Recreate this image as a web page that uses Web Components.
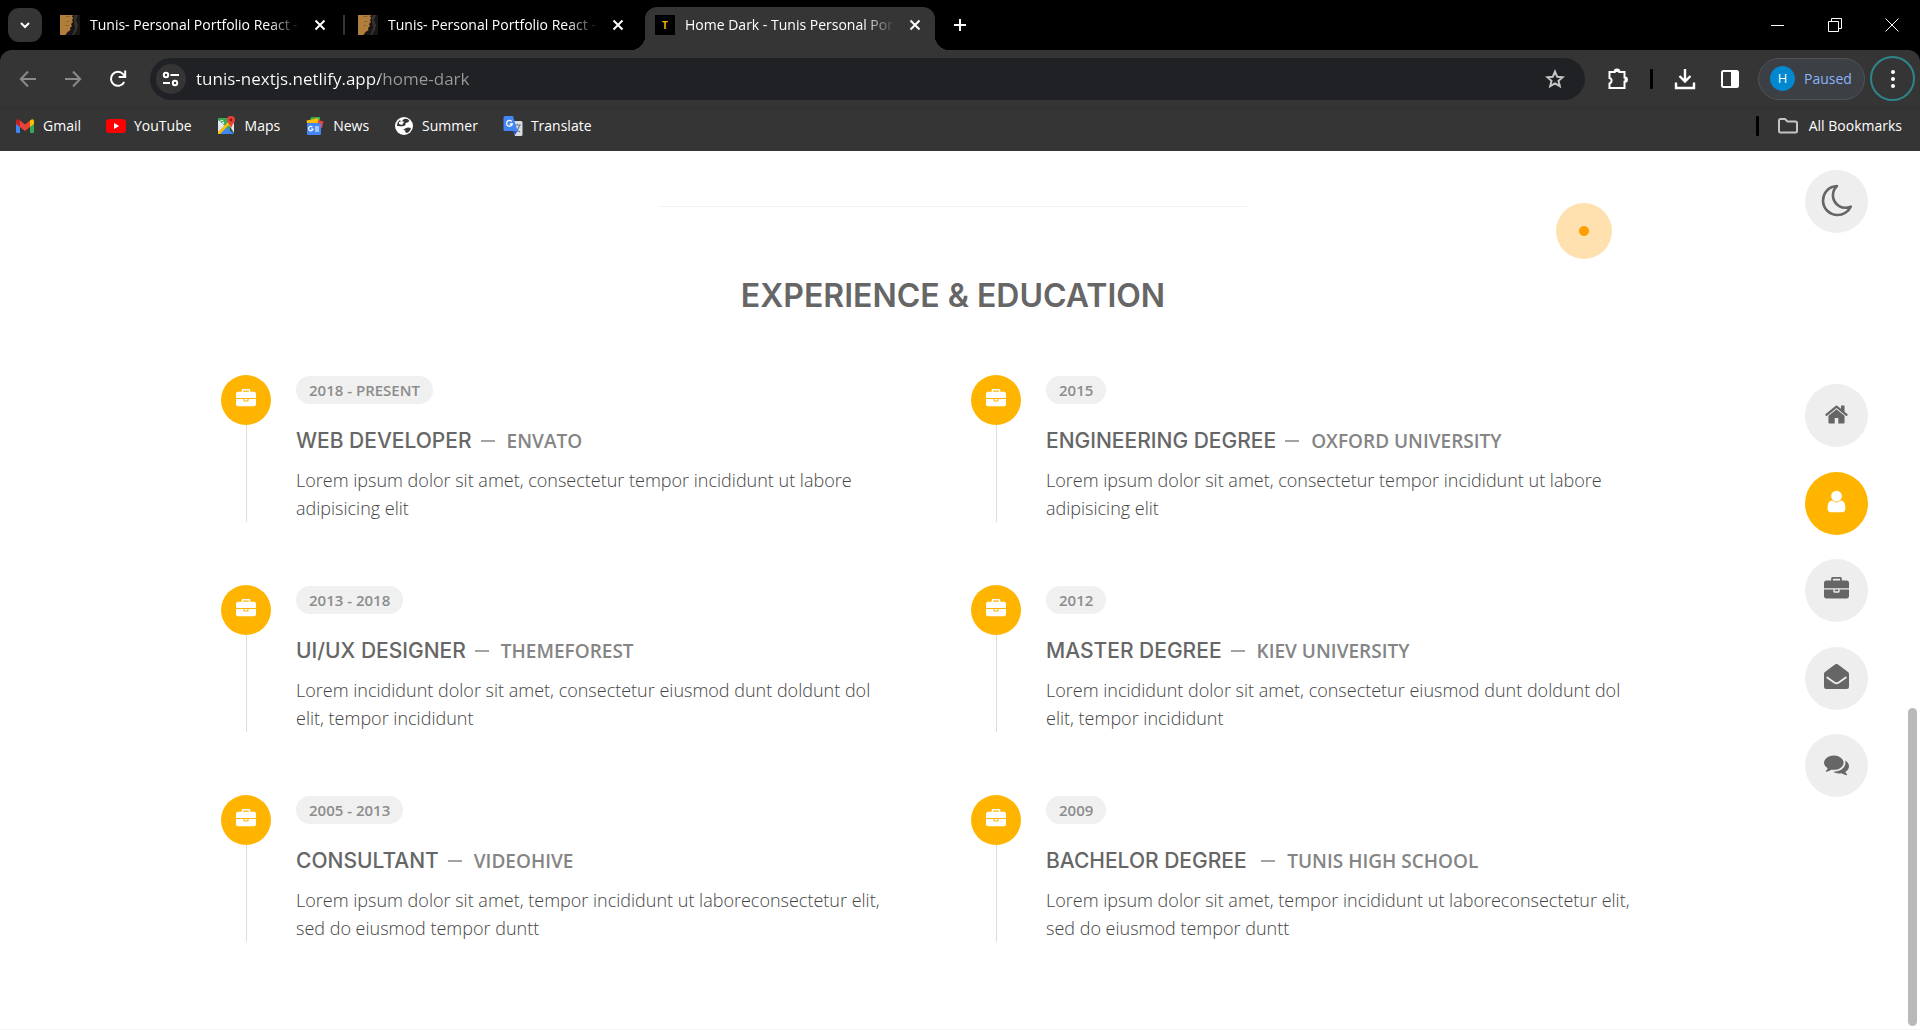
<!DOCTYPE html>
<html lang="en">
<head>
<meta charset="utf-8">
<title>Home Dark - Tunis Personal Portfolio</title>
<style>
  html, body { margin: 0; height: 100%; background: #fff; }
  body { font-family: "Open Sans", "Noto Sans", sans-serif; overflow: hidden; }
</style>
</head>
<body>
<browser-window></browser-window>

<script>
const svg = (box, w, h, body) =>
  `<svg viewBox="${box}" width="${w}" height="${h}" aria-hidden="true">${body}</svg>`;
const fa = (size, d, x = 0) => svg(`${x} 0 1792 1792`, size, size, `<path fill="currentColor" d="${d}"/>`);

const FA = {
  briefcase: 'M640 256h512v-128h-512v128zm1152 640v480q0 66-47 113t-113 47h-1472q-66 0-113-47t-47-113v-480h672v160q0 26 19 45t45 19h320q26 0 45-19t19-45v-160h672zm-768 0v128h-256v-128h256zm768-480v384h-1792v-384q0-66 47-113t113-47h352v-160q0-40 28-68t68-28h576q40 0 68 28t28 68v160h352q66 0 113 47t47 113z',
  home: 'M1472 992v480q0 26-19 45t-45 19h-384v-384h-256v384h-384q-26 0-45-19t-19-45v-480q0-1 .5-3t.5-3l575-474 575 474q1 2 1 6zm223-69l-62 74q-8 9-21 11h-3q-13 0-21-7l-692-577-692 577q-12 8-24 7-13-2-21-11l-62-74q-8-10-7-23.5t11-21.5l719-599q32-26 76-26t76 26l244 204v-195q0-14 9-23t23-9h192q14 0 23 9t9 23v408l219 182q10 8 11 21.5t-7 23.5z',
  user: 'M1536 1399q0 109-62.5 187t-150.5 78h-854q-88 0-150.5-78t-62.5-187q0-85 8.5-160.5t31.5-152 58.5-131 94-89 134.5-34.5q131 128 313 128t313-128q76 0 134.5 34.5t94 89 58.5 131 31.5 152 8.5 160.5zm-256-887q0 159-112.5 271.5t-271.5 112.5-271.5-112.5-112.5-271.5 112.5-271.5 271.5-112.5 271.5 112.5 112.5 271.5z',
  envelope: 'M0 700Q0 640 50 598Q420 290 790 30Q896 -40 1002 30Q1372 290 1742 598Q1792 640 1792 700V1632Q1792 1792 1632 1792H160Q0 1792 0 1632ZM270 905Q225 870 195 915L175 945Q150 985 190 1015L720 1400Q896 1490 1072 1400L1602 1015Q1642 985 1617 945L1597 915Q1567 870 1522 905L1000 1282Q896 1345 792 1282Z',
  comments: 'M1408 768q0 139-94 257t-256.5 186.5-353.5 68.5q-86 0-176-16-124 88-278 128-36 9-86 16h-3q-11 0-20.5-8t-11.5-21q-1-3-1-6.5t.5-6.5 2-6l2.5-5 3.5-5.5 4-5 4.5-5 4-4.5q5-6 23-25t26-29.5 22.5-29 25-38.5 20.5-44q-124-72-195-177t-71-224q0-139 94-257t256.5-186.5 353.5-68.5 353.5 68.5 256.5 186.5 94 257zm384 256q0 120-71 224.5t-195 176.5q10 24 20.5 44t25 38.5 22.5 29 26 29.5 23 25q1 1 4 4.5t4.5 5 4 5 3.5 5.5l2.5 5 2 6 .5 6.5-1 6.5q-3 14-13 22t-22 7q-50-7-86-16-154-40-278-128-90 16-176 16-271 0-472-132 58 4 88 4 161 0 309-45t264-129q125-92 192-212t67-254q0-77-23-152 129 71 204 178t75 230z',
  moon: 'M1390 1303q-54 9-110 9-182 0-337-90t-245-245-90-337q0-192 104-357-201 60-328.5 229t-127.5 384q0 130 51 248.5t136.5 204 204 136.5 248.5 51q144 0 273.5-61.5t220.5-171.5zm203-85q-94 203-283.5 324.5t-413.5 121.5q-156 0-298-61t-245-164-164-245-61-298q0-153 57.5-292.5t156-241.5 235.5-164.5 290-68.5q44-2 61 39 18 41-15 72-86 78-131.5 181.5t-45.5 218.5q0 148 73 273t198 198 273 73q118 0 228-51 41-18 72 13 14 14 17.5 34t-4.5 38z'
};

const line = (d, w = 2) => `<path d="${d}" fill="none" stroke="currentColor" stroke-width="${w}"/>`;
const ICONS = {
  chevron: svg('0 0 16 16', 16, 16, line('M4 6l4 4 4-4')),
  close: svg('0 0 20 20', 20, 20, line('M5.5 5.5l9 9M14.5 5.5l-9 9')),
  plus: svg('0 0 20 20', 20, 20, line('M10 4v12M4 10h12')),
  min: svg('0 0 16 16', 16, 16, line('M1 8.5h13', 1)),
  restore: svg('0 0 16 16', 16, 16, line('M1.500 4.500h10v10h-10zM4.500 4.500v-3h10v10h-3', 1)),
  shut: svg('0 0 16 16', 16, 16, line('M1.500 1.500l13 13M14.500 1.500l-13 13', 1)),
  back: svg('0 0 20 20', 20, 20, line('M18 10H3M10 2.500L2.800 10l7.200 7.500')),
  forward: svg('0 0 20 20', 20, 20, line('M2 10h15M10 2.500l7.200 7.500-7.200 7.500')),
  reload: svg('0 0 20 20', 20, 20, line('M16.200 13A7 7 0 1 1 15.200 5.200L17 7') + line('M17.200 1.500V8h-6.500')),
  site: svg('0 0 18 16', 18, 16, line('M8.500 4h8.500M1 12h7') + '<circle cx="4" cy="4" r="2.200" fill="none" stroke="currentColor" stroke-width="2"/><circle cx="13" cy="12" r="2.200" fill="none" stroke="currentColor" stroke-width="2"/>'),
  star: svg('0 0 20 20', 20, 20, line('M10 2.600l2.200 5.100 5.500.5-4.200 3.600 1.300 5.400L10 14.300l-4.800 2.900 1.300-5.400L2.300 8.200l5.500-.5z')),
  puzzle: svg('0 0 22 22', 22, 22, line('M2.500 4h5.200v-.500a2.300 2 0 0 1 4.600 0V4h5.200v5.400h.6a1.800 2.200 0 0 1 0 4.400h-.6V20h-15v-4.600a2.800 2.800 0 0 0 0-5.400z') + '<path fill="currentColor" d="M7.500 4a2.500 3 0 0 1 5 0zM17.500 9a3.500 2.700 0 0 1 0 5.200z"/>'),
  download: svg('0 0 22 22', 22, 22, line('M11 1v12M5.500 8l5.500 5.500L16.500 8M2 14.500V20h18v-5.500', 2.4)),
  panel: svg('0 0 20 20', 20, 20, '<rect x="2" y="2" width="16" height="16" rx="1.500" fill="none" stroke="currentColor" stroke-width="2"/><path fill="currentColor" d="M11 2h7v16h-7z"/>'),
  dots: svg('0 0 6 20', 6, 20, '<g fill="currentColor"><circle cx="3" cy="3" r="2"/><circle cx="3" cy="10" r="2"/><circle cx="3" cy="17" r="2"/></g>'),
  folder: svg('0 0 22 18', 22, 18, line('M2 3.500q0-1.500 1.500-1.500H8l2.500 2.500h8q1.500 0 1.500 1.500v8q0 1.500-1.500 1.500h-15Q2 15.500 2 14z')),
  photo: svg('0 0 20 20', 20, 20, '<path fill="#171515" d="M0 0h20v20H0z"/><path fill="#b27e3c" d="M0 0h13l-1 2 1.500 1-1.500 2 1 2-2 2 1 2-2 2 .500 2-3 2-2 3H0z"/><path fill="#80572a" d="M5 1h6l-4 1zM6 6h5l-4 1zM5 10h5l-4 1z"/><path fill="#36322f" d="M14 0h4l-2 5 2 5-1 5-3 5h-2l3-7-1-6z"/>'),
  gmail: svg('0 0 20 20', 20, 20, '<path fill="#4285f4" d="M1 5v11q0 1 1 1h3V8z"/><path fill="#34a853" d="M15 8v9h3q1 0 1-1V5z"/><path fill="#ea4335" d="M5 4.500l5 4 5-4V11l-5 4-5-4z"/><path fill="#c5221f" d="M1 5q.500-2.500 3-1.200l1 .700V11L1 8z"/><path fill="#fbbc04" d="M19 5q-.500-2.500-3-1.200l-1 .700V11l4-3z"/>'),
  youtube: svg('0 0 20 20', 20, 20, '<rect y="3" width="20" height="14" rx="3.500" fill="#f00"/><path fill="#fff" d="M8 7l5.200 3L8 13z"/>'),
  maps: svg('0 0 20 20', 20, 20, '<path fill="#34a853" d="M1 2h12v16H1z"/><path fill="#dfe7ee" d="M1 4l7 6-7 7zM12 9l5-2v10z"/><path fill="#4285f4" d="M3 18l6-7 8 7z"/><path fill="#fbbc04" d="M1 16L11 6l2 2L3 18H1z"/><path fill="#34a853" d="M11 10l6 7v1z"/><path fill="#ea4335" d="M14 0a4 4 0 0 1 4 4q0 2-2 4l-2 4-2-4q-2-2-2-4a4 4 0 0 1 4-4z"/><circle cx="14" cy="4" r="1.400" fill="#8b1a12"/><path d="M6.500 5.200a2 2 0 1 0 .300 1.500H5" fill="none" stroke="#fff"/>'),
  news: svg('0 0 20 20', 20, 20, '<path fill="#34a853" d="M6 1h9v6H5z"/><path fill="#fbbc04" d="M1.500 4.500L13 2l1 5H2z"/><path fill="#ea4335" d="M13 4l5.500 1.500L17 12h-4z"/><rect x="2" y="7" width="14" height="12" rx="1" fill="#4285f4"/><path d="M7.500 11.200a2.200 2.200 0 1 0 .500 1.800H6M10 11h4M10 13h4M10 15h4" fill="none" stroke="#fff" stroke-width="1.200"/>'),
  globe: svg('0 0 20 20', 20, 20, '<circle cx="10" cy="10" r="9" fill="#fff"/><path fill="#353535" d="M10 3q4-1 5.500 2l-2 1.500-2 .500v2l-2.500 1.500L6 10.200 3 10q0-4 3-6l1 2zM10 12.500l4-1 3 .500q-1 4-4 5l-2-1 .500-1.500-2-.500z"/><path fill="#fff" d="M5 6q4-1.500 5 0l-2 3-3-1zM8 10l4 1-1 2-2-.500z"/>'),
  translate: svg('0 0 20 20', 20, 20, '<path fill="#dadce0" d="M8 5h10q1.500 0 1.500 1.500v12Q19.500 20 18 20H12z"/><path d="M11 9h7M14.500 8v1M16.500 9.500q-1 4-4 6M12 11q2 4 5 5" fill="none" stroke="#5f7d95" stroke-width="1.100"/><path fill="#4285f4" d="M2 0h8l4.500 15H2Q.500 15 .500 13.500v-12Q.500 0 2 0z"/><path fill="#2a56c6" d="M10 15h4.500L12 19z"/><path d="M8.700 5.500a2.900 2.900 0 1 0 .600 2.500H6.700" fill="none" stroke="#fff" stroke-width="1.300"/>')
};

/* Base class: puts the element's styles and markup in an open shadow root. */
class Base extends HTMLElement {
  connectedCallback() {
    if (this.shadowRoot) return;
    this.attachShadow({ mode: 'open' }).innerHTML =
      `<style>
        *, *::before, *::after { box-sizing: border-box; }
        svg { display: block; flex: none; }
        button { border: 0; padding: 0; margin: 0; background: none; color: inherit; font: inherit; cursor: pointer;
          display: flex; align-items: center; justify-content: center; flex: none; }
        a { color: inherit; text-decoration: none; }
        ${this.styles()}
      </style>${this.markup()}`;
  }
  styles() { return ''; }
  markup() { return ''; }
}
const define = (name, cls) => customElements.define(name, cls);

define('browser-tab', class extends Base {
  styles() { return `
    :host { display: block; flex: 0 1 290px; min-width: 0; height: 50px; padding-top: 7px; color: #fff; position: relative; box-sizing: border-box; }
    .tab { display: flex; align-items: center; gap: 10px; height: 43px; padding: 0 10px 7px; border-radius: 12px 12px 0 0; }
    .title { flex: 1; min-width: 0; overflow: hidden; white-space: nowrap; font-size: 14px; line-height: 20px;
      -webkit-mask-image: linear-gradient(90deg, #000 85%, transparent); mask-image: linear-gradient(90deg, #000 85%, transparent); }
    .mark { width: 20px; height: 20px; background: #000; color: #f2b600; font-size: 10px; line-height: 20px; text-align: center; font-weight: 700; flex: none; }
    :host([active]) .tab { background: #353535; }
    :host([active])::before, :host([active])::after { content: ""; position: absolute; bottom: 0; width: 14px; height: 14px; }
    :host([active])::before { right: 100%; background: radial-gradient(circle at 0 0, transparent 14px, #353535 14px); }
    :host([active])::after { left: 100%; background: radial-gradient(circle at 100% 0, transparent 14px, #353535 14px); }`; }
  markup() { return `<div class="tab">
      ${this.hasAttribute('active') ? '<span class="mark">T</span>' : ICONS.photo}
      <span class="title"><slot></slot></span>
      <button aria-label="Close tab">${ICONS.close}</button></div>`; }
});

define('tab-strip', class extends Base {
  styles() { return `
    :host { display: flex; align-items: center; height: 50px; background: #000; color: #fff; padding-left: 8px; }
    .search { width: 34px; height: 34px; border-radius: 11px; background: #353535; margin-right: 8px; }
    .sep { width: 2px; height: 20px; background: #353535; margin: 0 3px; flex: none; }
    .gap { width: 7px; flex: none; }
    .new { margin-left: 15px; width: 20px; height: 20px; }
    .win { margin-left: auto; display: flex; }
    .win button { width: 57px; height: 50px; }`; }
  markup() { return `
    <button class="search" aria-label="Search tabs">${ICONS.chevron}</button>
    <browser-tab>Tunis- Personal Portfolio React -</browser-tab><span class="sep"></span>
    <browser-tab>Tunis- Personal Portfolio React -</browser-tab><span class="gap"></span>
    <browser-tab active>Home Dark - Tunis Personal Por</browser-tab>
    <button class="new" aria-label="New tab">${ICONS.plus}</button>
    <div class="win"><button aria-label="Minimize">${ICONS.min}</button><button aria-label="Restore">${ICONS.restore}</button><button aria-label="Close">${ICONS.shut}</button></div>`; }
});

define('address-bar', class extends Base {
  styles() { return `
    :host { display: flex; align-items: center; flex: 1; min-width: 0; height: 42px; border-radius: 21px; background: #202124; padding: 0 20px 0 6px; box-sizing: border-box; }
    .info { width: 30px; height: 30px; border-radius: 50%; background: #353535; color: #fff; margin-right: 10px; }
    input { flex: 1; min-width: 0; height: 30px; border: 0; outline: 0; padding: 0; font: 17px/30px "Open Sans", "Noto Sans", sans-serif;
      color: #fff; -webkit-text-fill-color: transparent; background: linear-gradient(90deg, #fff 184px, #9a9a9a 184px); -webkit-background-clip: text; background-clip: text; }
    .star { color: #c4c4c4; }`; }
  markup() { return `<button class="info" aria-label="Site information">${ICONS.site}</button>
    <input type="text" aria-label="Address" value="tunis-nextjs.netlify.app/home-dark">
    <button class="star" aria-label="Bookmark this page">${ICONS.star}</button>`; }
});

define('browser-toolbar', class extends Base {
  styles() { return `
    :host { display: block; background: #000; }
    .bar { display: flex; align-items: center; height: 58px; background: #353535; border-radius: 12px 12px 0 0; padding: 0 5px 0 18px; color: #fff; border-bottom: 1px solid #303030; }
    .nav { display: flex; gap: 25px; margin-right: 22px; }
    .dim { color: #8a8a8a; }
    .tools { display: flex; align-items: center; margin-left: 22px; gap: 22px; }
    .sep { width: 3px; height: 20px; margin: 0 -1px; background: #000; border-radius: 1px; }
    .panel { margin-left: 2px; }
    .profile { display: flex; align-items: center; gap: 9px; width: 107px; height: 42px; margin-left: 18px; padding: 0 11px; border: 1px solid #505257; border-radius: 21px; background: #3c3f44; color: #8ab4f8; font-size: 14px; justify-content: flex-start; }
    .avatar { width: 25px; height: 25px; border-radius: 50%; background: #0288d1; color: #fff; font-size: 13px; line-height: 25px; text-align: center; }
    .menu { width: 45px; height: 45px; margin-left: 5px; border: 2px solid #2f858c; border-radius: 50%; }`; }
  markup() { return `<div class="bar">
    <div class="nav"><button class="dim" aria-label="Back">${ICONS.back}</button><button class="dim" aria-label="Forward">${ICONS.forward}</button><button aria-label="Reload">${ICONS.reload}</button></div>
    <address-bar></address-bar>
    <div class="tools"><button aria-label="Extensions">${ICONS.puzzle}</button><span class="sep"></span><button aria-label="Downloads">${ICONS.download}</button><button class="panel" aria-label="Side panel">${ICONS.panel}</button></div>
    <button class="profile"><span class="avatar">H</span>Paused</button>
    <button class="menu" aria-label="Menu">${ICONS.dots}</button></div>`; }
});

define('bookmark-link', class extends Base {
  styles() { return `
    :host { display: block; }
    a { display: flex; align-items: center; gap: 8px; font-size: 14px; line-height: 20px; color: #fff; white-space: nowrap; }
    :host([icon="folder"]) a { gap: 10px; }
    svg { color: #c4c4c4; }`; }
  markup() { return `<a href="#">${ICONS[this.getAttribute('icon')]}<slot></slot></a>`; }
});

define('bookmark-bar', class extends Base {
  styles() { return `
    :host { display: flex; align-items: center; gap: 25px; height: 43px; padding: 0 18px 7px 15px; background: #353535; box-sizing: border-box; }
    .end { margin-left: auto; display: flex; align-items: center; gap: 18px; }
    .sep { width: 3px; height: 20px; background: #000; border-radius: 1px; }`; }
  markup() { return `
    <bookmark-link icon="gmail">Gmail</bookmark-link><bookmark-link icon="youtube">YouTube</bookmark-link>
    <bookmark-link icon="maps">Maps</bookmark-link><bookmark-link icon="news">News</bookmark-link>
    <bookmark-link icon="globe">Summer</bookmark-link><bookmark-link icon="translate">Translate</bookmark-link>
    <div class="end"><span class="sep"></span><bookmark-link icon="folder">All Bookmarks</bookmark-link></div>`; }
});

define('timeline-item', class extends Base {
  styles() { return `
    :host { display: flex; gap: 25px; padding: 0 56px 0 18px; color: #666; }
    .rail { display: flex; flex-direction: column; align-items: center; width: 50px; flex: none; }
    .dot { display: flex; align-items: center; justify-content: center; width: 50px; height: 50px; padding-bottom: 2px; border-radius: 50%; background: #ffb400; color: #fff; }
    .line { flex: 1; width: 1px; background: #ddd; }
    .time { display: block; width: fit-content; margin-top: 1px; padding: 0 13px; border-radius: 14px; background: #f0f0f0; color: #8c8c8c; font-size: 15px; line-height: 28px; font-weight: 600; }
    h5 { display: flex; align-items: center; margin: 23px 0 11px; font: 500 21px/28px Inter, "Open Sans", sans-serif; white-space: nowrap; }
    h5::after { content: ""; order: 1; width: 14px; height: 2px; margin: 0 12px 0 9px; background: #a3a3a3; }
    .name { white-space: pre; }
    .place { order: 2; font: 600 19px/28px "Open Sans", sans-serif; color: #858585; }
    p { margin: 0; font-size: 18px; font-weight: 300; line-height: 28px; color: #444; }`; }
  markup() { return `
    <div class="rail"><span class="dot">${fa(20, FA.briefcase)}</span><span class="line"></span></div>
    <div><span class="time">${this.getAttribute('time')}</span>
      <h5><span class="name">${this.getAttribute('name')}</span><span class="place">${this.getAttribute('place')}</span></h5>
      <p><slot></slot></p></div>`; }
});

define('round-button', class extends Base {
  styles() { return `
    :host { display: block; }
    button { width: 63px; height: 63px; padding-bottom: 3px; border-radius: 50%; background: #eee; color: #666; }
    :host([active]) button { background: #ffb400; color: #fff; }`; }
  markup() { const n = this.getAttribute('icon');
    return `<button aria-label="${n}">${n === 'moon' ? fa(37, FA.moon, -50) : fa(25, FA[n])}</button>`; }
});

define('portfolio-page', class extends Base {
  styles() { return `
    :host { display: grid; grid-template-columns: 1fr 14px; position: relative; background: #fff; border-bottom: 1px solid #f5f5f5; overflow: hidden; }
    main { grid-area: 1 / 1; padding-top: 55px; }
    hr { width: 588px; max-width: 80%; height: 1px; margin: 0 auto; border: 0; background: #f2f2f2; }
    h3 { margin: 70px 0 60px; text-align: center; font: 600 32px/38px Inter, "Open Sans", sans-serif; color: #666; }
    .grid { display: grid; grid-template-columns: 1fr 1fr; row-gap: 63px; max-width: 1500px; margin: 0 auto; }
    aside { grid-area: 1 / 1; justify-self: end; display: flex; flex-direction: column; gap: 151px; padding: 19px 38px 0 0; }
    nav { display: flex; flex-direction: column; justify-content: space-between; height: 413px; }
    .track { grid-area: 1 / 2; display: flex; flex-direction: column; justify-content: flex-end; padding: 0 3px 3px 2px; }
    .thumb { height: 36.4%; border-radius: 5px; background: #b9b9b9; }
    .cursor { position: absolute; left: 1556px; top: 52px; width: 56px; height: 56px; border-radius: 50%; background: radial-gradient(circle, #ffa000 4.500px, #ffe1b0 5.500px); }`; }
  markup() {
    const item = (time, name, place, text) => `<timeline-item time="${time}" name="${name}" place="${place}">${text}</timeline-item>`;
    const a = 'Lorem ipsum dolor sit amet, consectetur tempor incididunt ut labore adipisicing elit';
    const b = 'Lorem incididunt dolor sit amet, consectetur eiusmod dunt doldunt dol elit, tempor incididunt';
    const c = 'Lorem ipsum dolor sit amet, tempor incididunt ut laboreconsectetur elit, sed do eiusmod tempor duntt';
    return `
    <main><hr><h3>EXPERIENCE &amp; EDUCATION</h3>
      <div class="grid">
        ${item('2018 - PRESENT', 'WEB DEVELOPER', 'ENVATO', a)}${item('2015', 'ENGINEERING DEGREE', 'OXFORD UNIVERSITY', a)}
        ${item('2013 - 2018', 'UI/UX DESIGNER', 'THEMEFOREST', b)}${item('2012', 'MASTER DEGREE', 'KIEV UNIVERSITY', b)}
        ${item('2005 - 2013', 'CONSULTANT', 'VIDEOHIVE', c)}${item('2009', 'BACHELOR DEGREE ', 'TUNIS HIGH SCHOOL', c)}
      </div></main>
    <aside><round-button icon="moon"></round-button>
      <nav><round-button icon="home"></round-button><round-button icon="user" active></round-button><round-button icon="briefcase"></round-button><round-button icon="envelope"></round-button><round-button icon="comments"></round-button></nav></aside>
    <div class="track"><div class="thumb"></div></div>
    <div class="cursor"></div>`;
  }
});

define('browser-window', class extends Base {
  styles() { return `
    :host { display: flex; flex-direction: column; height: 100vh; }
    portfolio-page { flex: 1; min-height: 0; }`; }
  markup() { return `<tab-strip></tab-strip><browser-toolbar></browser-toolbar><bookmark-bar></bookmark-bar><portfolio-page></portfolio-page>`; }
});
</script>
</body>
</html>
